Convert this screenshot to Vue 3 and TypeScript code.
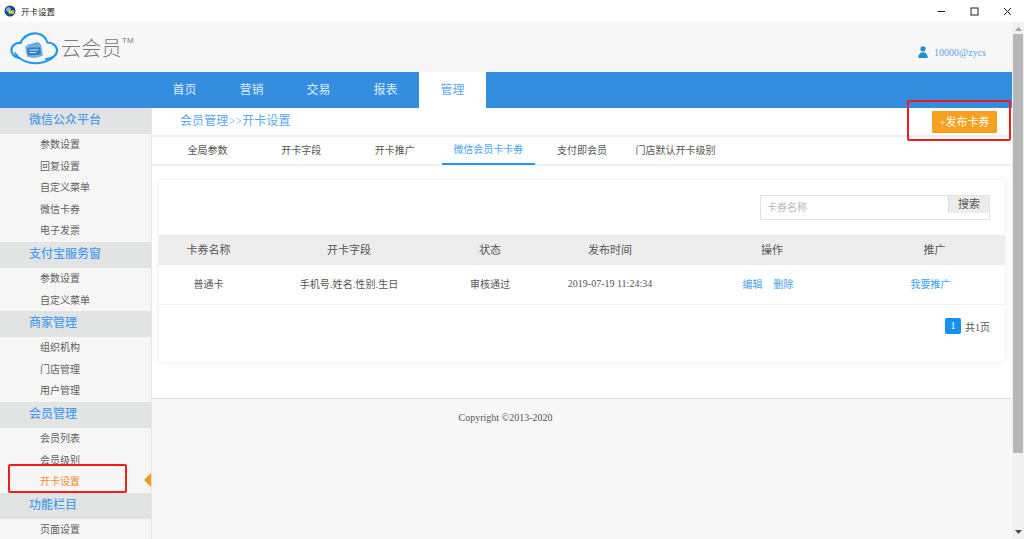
<script setup lang="ts">
interface Group { title: string; items: string[] }
const groups: Group[] = [
  { title: '微信公众平台', items: ['参数设置', '回复设置', '自定义菜单', '微信卡券', '电子发票'] },
  { title: '支付宝服务窗', items: ['参数设置', '自定义菜单'] },
  { title: '商家管理', items: ['组织机构', '门店管理', '用户管理'] },
  { title: '会员管理', items: ['会员列表', '会员级别', '开卡设置'] },
  { title: '功能栏目', items: ['页面设置'] },
]
const nav = ['首页', '营销', '交易', '报表', '管理']
const tabs = ['全局参数', '开卡字段', '开卡推广', '微信会员卡卡券', '支付即会员', '门店默认开卡级别']
const heads = ['卡券名称', '开卡字段', '状态', '发布时间', '操作', '推广']
</script>

<template>
  <div class="window">
    <div class="titlebar">
      <svg class="app-icon" width="12" height="12" viewBox="0 0 12 12">
        <circle cx="6" cy="6" r="5.500" fill="#174f86" />
        <circle cx="4.500" cy="4.500" r="2.300" fill="#7cc0ea" />
        <rect x="4.500" y="5.500" width="5.500" height="3.200" fill="#e9c45a" />
      </svg>
      <span class="title-text">开卡设置</span>
      <div class="win-controls">
        <svg width="9" height="9" viewBox="0 0 9 9"><path d="M0.500 4.500H8" stroke="#222" stroke-width="1" /></svg>
        <svg width="9" height="9" viewBox="0 0 9 9"><rect x="1" y="1" width="7" height="7" fill="none" stroke="#222" stroke-width="1" /></svg>
        <svg width="9" height="9" viewBox="0 0 9 9"><path d="M1 1L8 8M8 1L1 8" stroke="#222" stroke-width="1" /></svg>
      </div>
    </div>

    <div class="viewport">
      <div class="page">
        <header class="brand">
          <div class="logo">
            <svg width="48" height="34" viewBox="0 0 48 34">
              <path d="M9 27C3.500 25.500 1 22 1.500 18C2.200 14 6 11.500 10.500 12C13 5.500 20 1.500 27 2.500C32.500 3.300 36 7 37.500 11.500C43 11.500 47 15 47 19.500C47 24.500 42 28 36 28"
                fill="none" stroke="#1f97ea" stroke-width="2.200" stroke-linecap="round" />
              <path d="M5 22C9 29 19 33.200 29 32C35 31.300 40 29 43 26.500" fill="none" stroke="#1f97ea" stroke-width="2" stroke-linecap="round" />
              <path d="M15 14.500L28 11L31 13.500L22 15Z" fill="#5fa4d6" />
              <path d="M15 15.500L31 13.500L33 24.500C28 27.500 21 27.500 17 25.500Z" fill="#6fb0de" />
              <rect x="17.500" y="16.500" width="13" height="7.500" rx="0.800" transform="rotate(-3 24 20)" fill="#2f82c2" />
              <path d="M19.500 19H28.500M19.500 21.500H26" stroke="#cfe8f8" stroke-width="1.100" />
            </svg>
            <span class="logo-text">云会员</span>
            <span class="logo-tm">TM</span>
          </div>
          <div class="user">
            <svg width="10" height="12" viewBox="0 0 10 12">
              <circle cx="5" cy="2.800" r="2.600" fill="#1f8fcb" />
              <path d="M0.300 12C0.300 8 2.500 6.200 5 6.200C7.500 6.200 9.700 8 9.700 12Z" fill="#1f8fcb" />
            </svg>
            <span>10000@zycs</span>
          </div>
        </header>

        <nav class="nav">
          <a v-for="n in nav" :key="n" class="nav-item" :class="{ active: n === '管理' }">{{ n }}</a>
        </nav>

        <div class="body">
          <aside class="side">
            <section v-for="g in groups" :key="g.title">
              <h3 class="side-head">{{ g.title }}</h3>
              <div
                v-for="it in g.items"
                :key="it"
                class="side-item"
                :class="{ current: it === '开卡设置' }"
              >{{ it }}</div>
            </section>
          </aside>

          <main class="main">
            <div class="content">
              <div class="crumb-row">
                <span class="crumb">会员管理&gt;&gt;开卡设置</span>
                <button class="publish">+发布卡券</button>
              </div>
              <div class="tabs">
                <a
                  v-for="t in tabs"
                  :key="t"
                  class="tab"
                  :class="{ on: t === '微信会员卡卡券' }"
                >{{ t }}</a>
              </div>
              <div class="card-wrap">
                <div class="card">
                  <div class="search-row">
                    <div class="search">
                      <span class="placeholder">卡券名称</span>
                      <span class="search-btn">搜索</span>
                    </div>
                  </div>
                  <div class="grid head">
                    <span v-for="h in heads" :key="h">{{ h }}</span>
                  </div>
                  <div class="grid row">
                    <span>普通卡</span>
                    <span class="fields">手机号.姓名.性别.生日</span>
                    <span>审核通过</span>
                    <span class="date">2019-07-19 11:24:34</span>
                    <span class="links"><a>编辑</a><a>删除</a></span>
                    <span class="links"><a>我要推广</a></span>
                  </div>
                  <div class="pager">
                    <span class="page-no">1</span>
                    <span>共1页</span>
                  </div>
                </div>
              </div>
            </div>
            <footer class="copyright">Copyright ©2013-2020</footer>
          </main>
        </div>
      </div>

      <div class="scrollbar">
        <svg class="arrow" width="7" height="4" viewBox="0 0 7 4"><path d="M3.500 0L7 4H0Z" fill="#a3a3a3" /></svg>
        <div class="thumb"></div>
        <svg class="arrow arrow-down" width="7" height="4" viewBox="0 0 7 4"><path d="M0 0H7L3.500 4Z" fill="#505050" /></svg>
      </div>
    </div>

    <div class="mark mark-top"></div>
    <div class="mark mark-side"></div>
    <div class="pointer"></div>
  </div>
</template>

<style>
html, body { margin: 0; background: #fff; overflow: hidden; }
</style>

<style scoped>
.window {
  position: relative;
  width: 1024px;
  height: 539px;
  overflow: hidden;
  font-family: "Liberation Serif", "Noto Sans CJK SC", serif;
  font-size: 10px;
  color: #555;
  background: #fff;
}
.titlebar {
  height: 22px;
  display: flex;
  align-items: center;
  padding-left: 4px;
  box-sizing: border-box;
  background: #fff;
  color: #222;
}
.app-icon { margin-right: 5px; }
.title-text { font-size: 8.500px; }
.win-controls {
  margin-left: auto;
  display: flex;
  gap: 24px;
  padding-right: 12px;
}
.viewport { display: flex; height: 517px; }
.page { flex: 1; min-width: 0; display: flex; flex-direction: column; }
.brand {
  height: 50px;
  flex: none;
  background: #f7f7f7;
  display: flex;
  align-items: center;
  justify-content: space-between;
  padding: 0 26px 0 10px;
}
.logo { display: flex; align-items: center; margin-top: 2px; }
.logo-text {
  font-size: 20px;
  color: #75797d;
  margin: -2px 0 0 3px;
  width: 61px;
  letter-spacing: 0.300px;
  font-family: "Noto Sans CJK SC", sans-serif;
  font-weight: 300;
}
.logo-tm {
  font-size: 8px;
  color: #75797d;
  align-self: flex-start;
  margin-top: 5px;
  font-family: "Liberation Sans", sans-serif;
}
.user {
  display: flex;
  align-items: center;
  gap: 6px;
  color: #5aa5f0;
  margin-top: 10px;
}
.nav {
  height: 36px;
  flex: none;
  background: #348ddf;
  display: flex;
  padding-left: 151px;
}
.nav-item {
  width: 67px;
  box-sizing: border-box;
  padding-bottom: 3px;
  display: flex;
  align-items: center;
  justify-content: center;
  color: #dcecfa;
  font-size: 12px;
}
.nav-item.active { background: #fff; color: #5da9ec; }
.body { flex: 1; display: flex; min-height: 0; background: #f7f7f7; }
.side {
  width: 151px;
  flex: none;
  background: #f6f6f6;
  overflow: hidden;
}
.side-head {
  margin: 0;
  height: 26px;
  line-height: 25.400px;
  padding-left: 29px;
  background: #e2e4e4;
  color: #4a9df0;
  font-size: 12px;
  font-weight: 500;
}
.side-item {
  height: 21.600px;
  line-height: 21px;
  padding-left: 40px;
  color: #606060;
}
.side-item.current { color: #f58a2e; }
.main {
  flex: 1;
  min-width: 0;
  border-left: 1px solid #e6e6e6;
  display: flex;
  flex-direction: column;
}
.content {
  height: 290px;
  background: #fff;
  border-bottom: 1px solid #ddd;
  flex: none;
}
.crumb-row {
  height: 29px;
  box-sizing: border-box;
  border-bottom: 2px solid #eee;
  display: flex;
  align-items: flex-start;
  justify-content: space-between;
  padding: 5px 15px 0 28px;
}
.crumb { font-size: 12px; color: #5aa8ee; line-height: 16px; letter-spacing: 0.100px; }
.publish {
  height: 22px;
  width: 65px;
  margin-top: -2px;
  padding: 0 0 3px;
  border: 0;
  border-radius: 1px;
  background: #f8a11e;
  color: #fff;
  font: inherit;
  font-size: 11px;
  position: relative;
  z-index: 1;
}
.tabs {
  height: 29px;
  box-sizing: border-box;
  border-bottom: 2px solid #f0f0f0;
  display: flex;
  padding-left: 8.800px;
}
.tab {
  width: 93.600px;
  height: 28px;
  box-sizing: border-box;
  padding-bottom: 3px;
  display: flex;
  align-items: center;
  justify-content: center;
  color: #555;
}
.tab.on { color: #4aa3f0; border-bottom: 2px solid #2196f0; }
.card-wrap { padding: 14px 7px 0; }
.card {
  height: 182px;
  background: #fff;
  box-shadow: 0 0 5px rgba(0, 0, 0, 0.09);
}
.search-row {
  height: 55px;
  box-sizing: border-box;
  padding: 15px 15px 0 0;
  display: flex;
  justify-content: flex-end;
}
.search {
  width: 230px;
  height: 25px;
  box-sizing: border-box;
  border: 1px solid #e2e2e2;
  display: flex;
  align-items: flex-start;
  justify-content: space-between;
}
.placeholder { color: #b8b8b8; padding-left: 6px; line-height: 24px; }
.search-btn {
  width: 40px;
  height: 17px;
  line-height: 17px;
  text-align: center;
  font-size: 11px;
  background: #ececec;
  border-left: 1px solid #ddd;
  color: #555;
}
.grid {
  display: grid;
  grid-template-columns: 99px 182px 100px 140px 184px 141px;
  align-items: center;
  text-align: center;
}
.head { height: 30px; padding-bottom: 2px; box-sizing: border-box; background: #ededed; font-size: 11px; }
.row { height: 37px; padding-bottom: 2px; border-bottom: 1px solid #f0f0f0; box-sizing: content-box; }
.fields { letter-spacing: 0.100px; }
.date { white-space: nowrap; }
.links { padding-right: 8px; }
.links a { color: #3f9ff0; }
.links a + a { margin-left: 11px; }
.pager {
  display: flex;
  justify-content: flex-end;
  align-items: center;
  gap: 4px;
  padding: 13px 15px 0 0;
  font-size: 10px;
}
.page-no {
  width: 16px;
  height: 16px;
  line-height: 16px;
  text-align: center;
  background: #1890f0;
  color: #fff;
  border-radius: 2px;
}
.copyright {
  text-align: center;
  padding: 13px 153px 0 0;
  color: #555;
}
.scrollbar {
  width: 12px;
  flex: none;
  background: #f1f1f1;
  display: flex;
  flex-direction: column;
  align-items: center;
  padding-top: 5px;
  box-sizing: border-box;
}
.arrow { flex: none; }
.arrow-down { margin-top: auto; margin-bottom: 5px; }
.thumb {
  width: 10px;
  height: 419px;
  margin-top: 3px;
  background: #b6b6b6;
}
.mark {
  position: absolute;
  box-sizing: border-box;
  border: 2px solid #f01d1d;
  border-radius: 2px;
}
.mark-top { left: 907px; top: 100px; width: 104px; height: 41px; }
.mark-side { left: 8px; top: 464px; width: 119px; height: 29px; }
.pointer {
  position: absolute;
  left: 144px;
  top: 473px;
  width: 0;
  height: 0;
  border-top: 7px solid transparent;
  border-bottom: 7px solid transparent;
  border-right: 7px solid #f79a13;
}
</style>
